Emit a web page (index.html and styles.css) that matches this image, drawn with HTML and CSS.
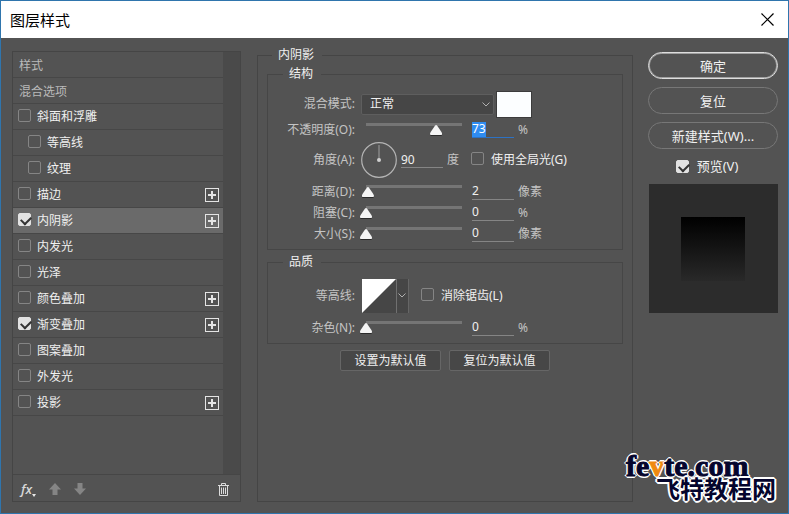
FILE: index.html
```html
<!DOCTYPE html>
<html lang="zh-CN">

<head>
    <title>图层样式</title>
    <meta charset="UTF-8">
    <meta name="viewport" content="width=device-width, initial-scale=1">
    <link rel="stylesheet" href="styles.css">
</head>

<body>
    <div class="window">
        <header class="titlebar">
            <h1>图层样式</h1>
            <button class="close" type="button" aria-label="关闭">
                <svg width="13" height="13" viewBox="0 0 13 13"><path d="M0.5 0.5l12 12M12.5 0.5l-12 12" stroke="#000" stroke-width="1.2" fill="none"/></svg>
            </button>
        </header>

        <main class="content">
            <!-- 左侧样式列表 -->
            <section class="styles">
                <div class="scroll">
                    <ul class="list">
                        <li class="head">样式</li>
                        <li class="head">混合选项</li>
                        <li><label><input type="checkbox">斜面和浮雕</label></li>
                        <li class="sub"><label><input type="checkbox">等高线</label></li>
                        <li class="sub"><label><input type="checkbox">纹理</label></li>
                        <li><label><input type="checkbox">描边</label><button class="plus" type="button" aria-label="添加描边"></button></li>
                        <li class="active"><label><input type="checkbox" checked>内阴影</label><button class="plus" type="button" aria-label="添加内阴影"></button></li>
                        <li><label><input type="checkbox">内发光</label></li>
                        <li><label><input type="checkbox">光泽</label></li>
                        <li><label><input type="checkbox">颜色叠加</label><button class="plus" type="button" aria-label="添加颜色叠加"></button></li>
                        <li><label><input type="checkbox" checked>渐变叠加</label><button class="plus" type="button" aria-label="添加渐变叠加"></button></li>
                        <li><label><input type="checkbox">图案叠加</label></li>
                        <li><label><input type="checkbox">外发光</label></li>
                        <li><label><input type="checkbox">投影</label><button class="plus" type="button" aria-label="添加投影"></button></li>
                    </ul>
                </div>
                <div class="tools">
                    <button class="fx" type="button">fx<svg width="4" height="3" viewBox="0 0 4 3"><path d="M0 0h4L2 3z" fill="#e8e8e8"/></svg></button>
                    <button type="button" aria-label="上移">
                        <svg width="12" height="12" viewBox="0 0 12 12"><path d="M6 0l6 6.500H8.500V12h-5V6.500H0z" fill="#858585"/></svg>
                    </button>
                    <button type="button" aria-label="下移">
                        <svg width="12" height="12" viewBox="0 0 12 12"><path d="M6 12l6-6.500H8.500V0h-5v5.500H0z" fill="#858585"/></svg>
                    </button>
                    <button class="trash" type="button" aria-label="删除">
                        <svg width="11" height="13" viewBox="0 0 11 13"><path d="M0 2.500h11M3.500 2.500v-2h4v2M1.500 3v9.500h8V3M3.500 4.500v6.500M5.500 4.500v6.500M7.500 4.500v6.500" stroke="#dcdcdc" fill="none"/></svg>
                    </button>
                </div>
            </section>

            <!-- 中间参数 -->
            <fieldset class="panel">
                <legend>内阴影</legend>

                <fieldset class="group">
                    <legend>结构</legend>
                    <div class="row blend">
                        <label class="name" for="mode">混合模式:</label>
                        <div class="select">
                            <select id="mode">
                                <option>正常</option>
                            </select>
                            <svg width="8" height="5" viewBox="0 0 8 5"><path d="M0.500 0.500L4 4l3.500-3.500" stroke="#b0b0b0" fill="none"/></svg>
                        </div>
                        <button class="swatch" type="button" aria-label="阴影颜色"></button>
                    </div>
                    <div class="row opacity">
                        <label class="name" for="opacity">不透明度(O):</label>
                        <input type="range" min="0" max="100" value="73" aria-label="不透明度">
                        <input class="num" id="opacity" type="text" value="73">
                        <span class="unit">%</span>
                    </div>
                    <div class="row angle">
                        <label class="name" for="angle">角度(A):</label>
                        <svg class="dial" width="36" height="36" viewBox="0 0 36 36">
                            <circle cx="18" cy="18" r="17.300" fill="none" stroke="#b4b4b4" stroke-width="1.200"/>
                            <path d="M18 3v15" stroke="#a0a0a0"/>
                            <circle cx="18" cy="18" r="2" fill="#d0d0d0"/>
                        </svg>
                        <input class="num" id="angle" type="text" value="90">
                        <span class="unit">度</span>
                        <label class="check"><input type="checkbox">使用全局光(G)</label>
                    </div>
                    <div class="row">
                        <label class="name" for="distance">距离(D):</label>
                        <input type="range" min="0" max="100" value="2" aria-label="距离">
                        <input class="num" id="distance" type="text" value="2">
                        <span class="unit">像素</span>
                    </div>
                    <div class="row">
                        <label class="name" for="choke">阻塞(C):</label>
                        <input type="range" min="0" max="100" value="0" aria-label="阻塞">
                        <input class="num" id="choke" type="text" value="0">
                        <span class="unit">%</span>
                    </div>
                    <div class="row">
                        <label class="name" for="size">大小(S):</label>
                        <input type="range" min="0" max="100" value="0" aria-label="大小">
                        <input class="num" id="size" type="text" value="0">
                        <span class="unit">像素</span>
                    </div>
                </fieldset>

                <fieldset class="group">
                    <legend>品质</legend>
                    <div class="row contour-row">
                        <label class="name" for="contour">等高线:</label>
                        <button class="contour" id="contour" type="button">
                            <svg width="34" height="34" viewBox="0 0 34 34"><path d="M0 0h34L0 34z" fill="#fff"/></svg>
                            <svg class="arrow" width="8" height="5" viewBox="0 0 8 5"><path d="M0.500 0.500L4 4l3.500-3.500" stroke="#b0b0b0" fill="none"/></svg>
                        </button>
                        <label class="check"><input type="checkbox">消除锯齿(L)</label>
                    </div>
                    <div class="row">
                        <label class="name" for="noise">杂色(N):</label>
                        <input type="range" min="0" max="100" value="0" aria-label="杂色">
                        <input class="num" id="noise" type="text" value="0">
                        <span class="unit">%</span>
                    </div>
                </fieldset>

                <div class="defaults">
                    <button type="button">设置为默认值</button>
                    <button type="button">复位为默认值</button>
                </div>
            </fieldset>

            <!-- 右侧按钮和预览 -->
            <aside class="side">
                <button class="pill primary" type="button">确定</button>
                <button class="pill" type="button">复位</button>
                <button class="pill" type="button">新建样式(W)...</button>
                <label class="check"><input type="checkbox" checked>预览(V)</label>
                <div class="preview"><div class="sample"></div></div>
            </aside>
        </main>

        <div class="logo">
            <div class="logo-en">fe<span>v</span>te.com</div>
            <div class="logo-cn">飞特教程网</div>
        </div>
    </div>
    <script>
        (function () {
            var opacity = document.getElementById('opacity');
            opacity.focus();
            opacity.select();
        })()
    </script>
</body>

</html>
```
FILE: styles.css
```css
* {
    margin: 0;
    padding: 0;
    box-sizing: border-box;
}

body {
    font: 12px/16px "Noto Sans", "Noto Sans CJK SC", sans-serif;
    color: #f0f0f0;
}

button,
input,
select {
    font: inherit;
    color: inherit;
    background: none;
    border: 0;
    outline: 0;
}

svg {
    display: block;
}

.window {
    position: relative;
    display: flex;
    flex-direction: column;
    min-height: 100vh;
    background: #535353;
    border: 1px solid #2f75ad;
}

/* 标题栏 */
.titlebar {
    display: flex;
    align-items: center;
    justify-content: space-between;
    height: 37px;
    padding: 0 14px 0 9px;
    background: #fff;
    color: #000;
}

.titlebar h1 {
    font-size: 15px;
    font-weight: normal;
}

.content {
    flex: 1;
    display: flex;
    padding: 0 10px 11px 11px;
}

/* 左侧列表 */
.styles {
    display: flex;
    flex-direction: column;
    width: 229px;
    margin: 13px 16px 0 0;
    border: 1px solid #454545;
}

.scroll {
    flex: 1;
    padding-right: 17px;
    background: linear-gradient(#4a4a4a, #4a4a4a) right / 17px 100% no-repeat;
    border-bottom: 1px solid #464646;
}

.list {
    list-style: none;
}

.list li {
    display: flex;
    align-items: center;
    justify-content: space-between;
    height: 26px;
    padding: 1px 4px 0 5px;
    border-bottom: 1px solid #474747;
}

.list .head {
    padding-left: 6px;
    padding-top: 3px;
    color: #bababa;
}

.list .sub {
    padding-left: 15px;
}

.list .active {
    background: #6a6a6a;
}

.list label,
.check {
    display: flex;
    align-items: center;
    gap: 6px;
}

input[type="checkbox"] {
    appearance: none;
    width: 13px;
    height: 13px;
    border: 1px solid #858585;
    border-radius: 2px;
}

.list input,
.row .check input {
    margin-bottom: 3px;
}

input[type="checkbox"]:checked {
    border-color: #e2e2e2;
    background: #e2e2e2;
}

input[type="checkbox"]:checked::before {
    content: "";
    display: block;
    width: 8px;
    height: 5px;
    margin: 2px 0 0 2px;
    border-left: 2px solid #333;
    border-bottom: 2px solid #333;
    transform: rotate(-45deg);
}

.plus {
    width: 14px;
    height: 14px;
    border: 1px solid #e4e4e4;
    background:
        linear-gradient(#e4e4e4, #e4e4e4) center / 8px 2px no-repeat,
        linear-gradient(#e4e4e4, #e4e4e4) center / 2px 8px no-repeat;
}

.tools {
    display: flex;
    align-items: center;
    gap: 13px;
    height: 26px;
    padding: 2px 11px 0 8px;
}

.fx {
    display: flex;
    align-items: flex-end;
    font: italic 600 13px/16px "Open Sans", "Noto Sans", sans-serif;
    color: #d8d8d8;
}

.trash {
    margin-left: auto;
}

/* 参数面板 */
.panel {
    flex: 1;
    min-width: 0;
    margin-top: 9px;
    padding: 3px 9px 0;
    border: 1px solid #454545;
}

.panel > legend,
.group > legend {
    padding: 0 8px 0 6px;
    margin-left: 5px;
}

.group {
    padding: 9px 0 5px;
    border: 1px solid #464646;
}

.group + .group {
    margin-top: 4px;
}

.group > legend {
    margin-left: 15px;
}

.row {
    display: flex;
    align-items: center;
    height: 21px;
}

.name {
    width: 87px;
    margin-right: 5px;
    text-align: right;
    color: #c4c4c4;
}

.blend {
    height: 26px;
}

.opacity {
    height: 25px;
}

.angle {
    height: 36px;
    margin-bottom: 3px;
}

.contour-row {
    height: 34px;
    margin-bottom: 4px;
}

.select {
    display: grid;
    align-items: center;
    width: 133px;
    margin-left: 1px;
}

.select > * {
    grid-area: 1 / 1;
}

.select svg {
    justify-self: end;
    margin-right: 4px;
    pointer-events: none;
}

select {
    appearance: none;
    width: 100%;
    height: 21px;
    padding: 0 8px;
    border: 1px solid #5e5e5e;
    border-radius: 2px;
    background: #464646;
}

.swatch {
    width: 36px;
    height: 27px;
    margin-left: 2px;
    border: 1px solid #3c3c3c;
    background: #fcfeff;
}

input[type="range"] {
    appearance: none;
    width: 108px;
    height: 13px;
}

input[type="range"]::-webkit-slider-runnable-track {
    height: 13px;
    background: linear-gradient(#757575, #757575) 6px 0 / calc(100% - 12px) 3px no-repeat;
}

input[type="range"]::-webkit-slider-thumb {
    appearance: none;
    width: 12px;
    height: 11px;
    margin-top: 2px;
    background: linear-gradient(#f4f4f4 10px, #2a2a2a 10px);
    clip-path: polygon(50% 0, 58% 5%, 92% 58%, 100% 75%, 96% 100%, 4% 100%, 0 75%, 8% 58%, 42% 5%);
}

.num {
    width: 42px;
    height: 16px;
    margin-left: 4px;
    border-bottom: 1px solid #858585;
}

.num:focus {
    border-bottom: 1px solid #2d72c4;
}

.num::selection {
    color: #fff;
    background: #2f8cf0;
}

.unit {
    margin-left: 4px;
    color: #c4c4c4;
}

.row .check {
    gap: 7px;
    margin-left: 12px;
}

.dial {
    margin-left: 1px;
}

.contour {
    display: flex;
    align-items: center;
    margin-left: 2px;
    border-right: 1px solid #666;
    background: #464646;
}

.arrow {
    box-sizing: content-box;
    padding: 14px 2px 15px 1px;
    border-left: 1px solid #707070;
}

.defaults {
    display: flex;
    justify-content: center;
    gap: 8px;
    margin-top: 6px;
}

.defaults button {
    width: 101px;
    height: 21px;
    border: 1px solid #666;
    border-radius: 2px;
    background: #474747;
}

/* 右侧 */
.side {
    display: flex;
    flex-direction: column;
    align-items: center;
    gap: 8px;
    width: 130px;
    margin: 14px 0 0 15px;
}

.pill {
    width: 100%;
    height: 27px;
    border: 1px solid #777;
    border-radius: 14px;
    font-size: 13px;
}

.primary {
    border-color: #dedede;
    box-shadow: inset 0 0 0 1px #a0a0a0;
}

.side .check {
    gap: 8px;
    padding: 1px 12px 0 0;
    font-size: 13px;
}

.preview {
    display: flex;
    align-items: center;
    justify-content: center;
    width: 129px;
    height: 129px;
    margin-top: 2px;
    background: #2c2c2c;
}

.sample {
    width: 64px;
    height: 64px;
    background: linear-gradient(#000, #292929);
}

/* 右下角水印 */
.logo {
    position: absolute;
    right: 12px;
    bottom: 13px;
    color: #05052d;
    -webkit-text-stroke: 1px currentColor;
    text-shadow: 2px 0 #fff, -2px 0 #fff, 0 2px #fff, 0 -2px #fff,
        1px 1px #fff, -1px 1px #fff, 1px -1px #fff, -1px -1px #fff;
}

.logo-en {
    margin-left: -30px;
    font: bold 30px/20px "Liberation Serif", serif;
}

.logo-en span {
    color: #f08a10;
}

.logo-cn {
    font: bold 24px/24px "Noto Sans CJK SC", sans-serif;
    -webkit-text-stroke: 0;
}
```
